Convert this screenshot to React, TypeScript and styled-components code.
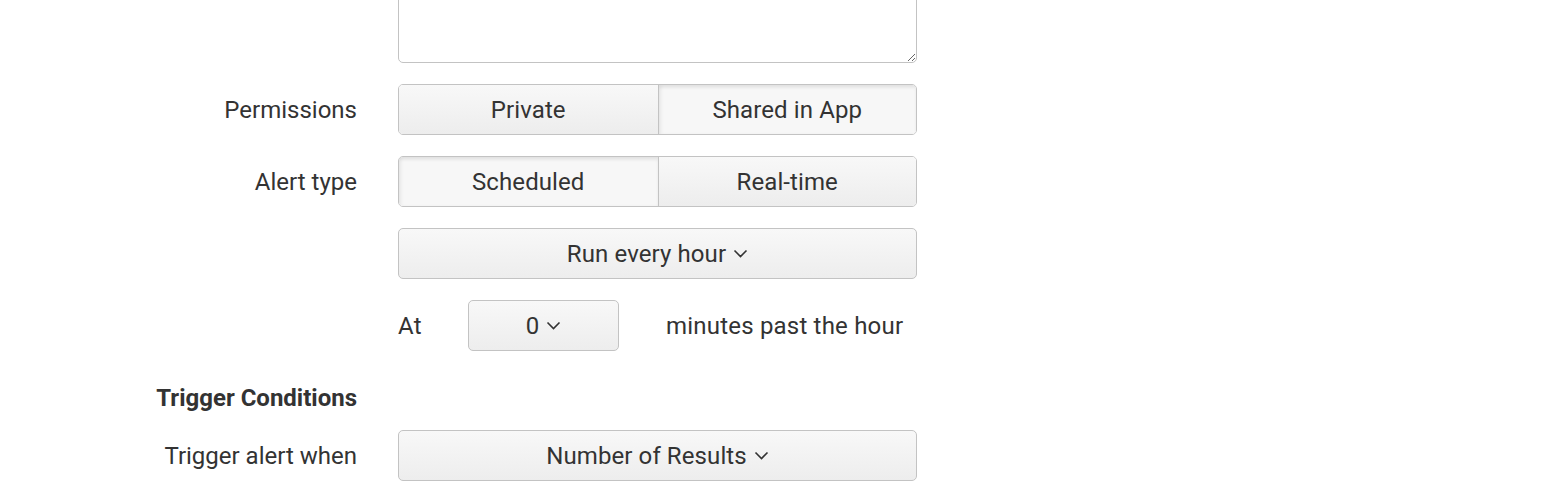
import styled, { createGlobalStyle, css } from 'styled-components';

const GlobalStyle = createGlobalStyle`
	html, body {
		margin: 0;
		padding: 0;
		background: #fff;
		overflow: hidden;
	}
	body {
		font-family: Roboto, 'Liberation Sans', sans-serif;
		color: #333;
	}
`;

const Form = styled.div`
	display: flex;
	flex-direction: column;
	gap: 21px;
	margin-top: -57px;
	font-size: 24px;
`;

const Row = styled.div`
	display: grid;
	grid-template-columns: 357px 519px;
	column-gap: 41px;
	align-items: center;
`;

const Label = styled.div<{ $bold?: boolean }>`
	text-align: right;
	white-space: nowrap;
	font-weight: ${(p) => (p.$bold ? 700 : 400)};
	font-size: 24px;
	letter-spacing: 0;
`;

const TextArea = styled.textarea`
	box-sizing: border-box;
	width: 519px;
	height: 120px;
	border: 1px solid #c3c3c3;
	border-radius: 5px;
	background: #fff;
	resize: vertical;
	font: inherit;
	outline: none;
`;

const buttonBase = css`
	box-sizing: border-box;
	height: 51px;
	display: flex;
	align-items: center;
	justify-content: center;
	gap: 7px;
	font-family: Roboto, 'Liberation Sans', sans-serif;
	font-size: 24px;
	letter-spacing: 0.1px;
	color: #333;
	background: linear-gradient(#f8f8f8, #ededed);
	cursor: pointer;
`;

const Group = styled.div`
	display: grid;
	grid-template-columns: 1fr 1fr;
	height: 51px;
	border: 1px solid #c3c3c3;
	border-radius: 5px;
	overflow: hidden;
	box-sizing: border-box;
`;

const Segment = styled.button<{ $active?: boolean }>`
	${buttonBase};
	height: 49px;
	border: none;
	& + & {
		border-left: 1px solid #c3c3c3;
	}
	${(p) =>
		p.$active &&
		css`
			background: #f7f7f7;
			box-shadow: inset 0 3px 3px rgba(0, 0, 0, 0.07), inset 3px 0 3px rgba(0, 0, 0, 0.04);
		`}
`;

const Dropdown = styled.button<{ $width?: number }>`
	${buttonBase};
	width: ${(p) => (p.$width ? `${p.$width}px` : '100%')};
	border: 1px solid #c3c3c3;
	border-radius: 5px;
`;

const InlineRow = styled.div`
	display: flex;
	align-items: center;
`;

const InlineText = styled.span<{ $width?: number }>`
	width: ${(p) => (p.$width ? `${p.$width}px` : 'auto')};
	white-space: nowrap;
	letter-spacing: 0.2px;
`;

const Heading = styled(Row)`
	margin-top: 12px;
	margin-bottom: -3px;
`;

const Chevron = () => (
	<svg width="15" height="9" viewBox="0 0 15 9" fill="none">
		<polyline points="1.5,1.5 7.5,7.5 13.5,1.5" stroke="#333" strokeWidth="1.6" />
	</svg>
);

export default function App() {
	return (
		<>
			<GlobalStyle />
			<Form>
				<Row>
					<div />
					<TextArea />
				</Row>
				<Row>
					<Label>Permissions</Label>
					<Group>
						<Segment>Private</Segment>
						<Segment $active>Shared in App</Segment>
					</Group>
				</Row>
				<Row>
					<Label>Alert type</Label>
					<Group>
						<Segment $active>Scheduled</Segment>
						<Segment>Real-time</Segment>
					</Group>
				</Row>
				<Row>
					<div />
					<Dropdown>
						Run every hour <Chevron />
					</Dropdown>
				</Row>
				<Row>
					<div />
					<InlineRow>
						<InlineText $width={70}>At</InlineText>
						<Dropdown $width={151}>
							0 <Chevron />
						</Dropdown>
						<InlineText style={{ marginLeft: 47 }}>minutes past the hour</InlineText>
					</InlineRow>
				</Row>
				<Heading>
					<Label $bold>Trigger Conditions</Label>
					<div />
				</Heading>
				<Row>
					<Label>Trigger alert when</Label>
					<Dropdown>
						Number of Results <Chevron />
					</Dropdown>
				</Row>
			</Form>
		</>
	);
}
